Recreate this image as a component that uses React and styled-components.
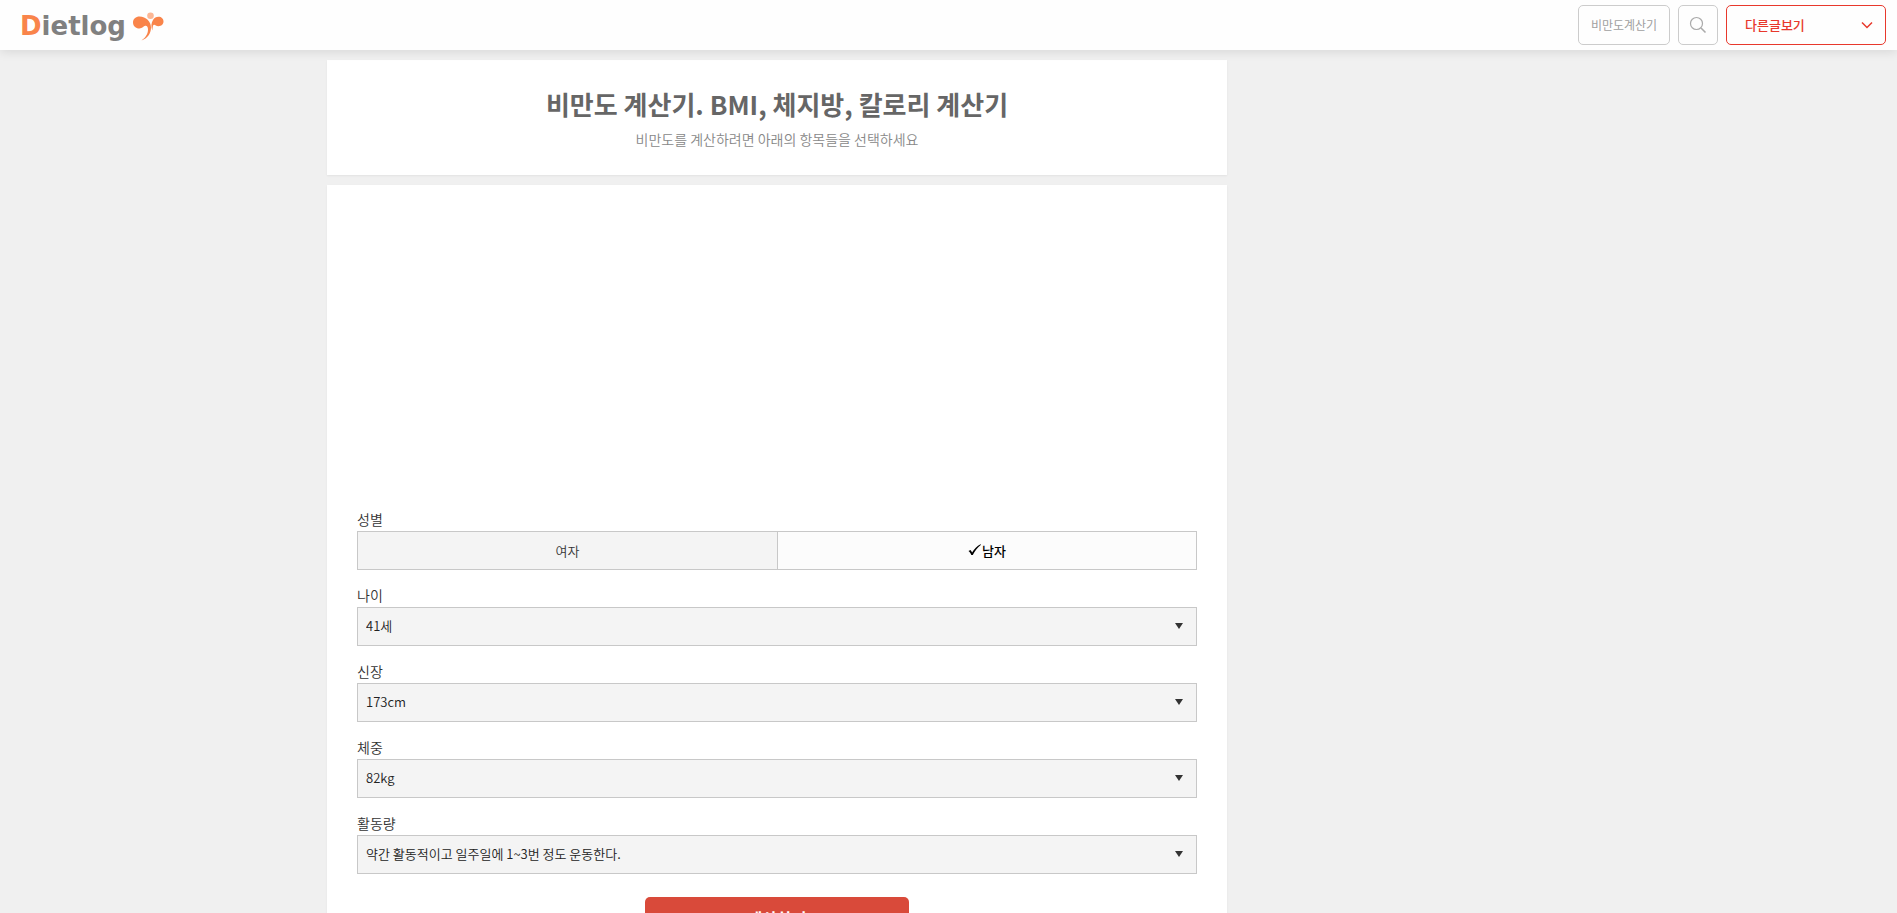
import React, { useState } from "react";
import styled, { createGlobalStyle } from "styled-components";

const GlobalStyle = createGlobalStyle`
  *, *::before, *::after { box-sizing: border-box; }
  body {
    margin: 0;
    background: #f0f0f0;
    color: #444;
    font-family: "Noto Sans CJK KR", "Noto Sans", sans-serif;
    font-size: 13px;
    line-height: 20px;
  }
  button, select, input { font: inherit; color: inherit; }
`;

const Header = styled.header`
  position: sticky;
  top: 0;
  z-index: 2;
  display: flex;
  align-items: center;
  justify-content: space-between;
  height: 50px;
  padding: 0 11px 0 20px;
  background: #fefefe;
  box-shadow: 0 2px 10px rgba(0, 0, 0, 0.1);
`;

const Logo = styled.a`
  display: flex;
  align-items: center;
  gap: 7px;
  padding-top: 2px;
  color: #808080;
  font-family: "DejaVu Sans", sans-serif;
  font-size: 26px;
  font-weight: 700;
  line-height: 32px;
  text-decoration: none;
`;

const LogoInitial = styled.span`
  color: #f9844a;
`;

const Nav = styled.nav`
  display: flex;
  gap: 8px;
`;

const NavButton = styled.button`
  display: flex;
  align-items: center;
  justify-content: ${(p) => (p.$spread ? "space-between" : "center")};
  width: ${(p) => p.$width};
  height: 40px;
  padding: ${(p) => (p.$spread ? "0 12px 0 18px" : "0")};
  border: 1px solid ${(p) => (p.$accent ? "#e8382c" : "#ccc")};
  border-radius: 5px;
  background: #fefefe;
  color: ${(p) => (p.$accent ? "#e8382c" : "#a0a0a0")};
  font-size: ${(p) => (p.$accent ? "13px" : "12px")};
  font-weight: ${(p) => (p.$accent ? 500 : 400)};
  cursor: pointer;
`;

const Page = styled.div`
  max-width: 1243px;
  margin: 0 auto;
  padding: 10px 0;
`;

const Column = styled.main`
  display: flex;
  flex-direction: column;
  gap: 10px;
  max-width: 900px;
`;

const Card = styled.section`
  padding: ${(p) => p.$padding};
  background: #fff;
  box-shadow: 0 1px 2px rgba(0, 0, 0, 0.06);
`;

const Title = styled.h1`
  margin: 0;
  color: #666;
  font-size: 26px;
  font-weight: 700;
  line-height: 40px;
  text-align: center;
`;

const Subtitle = styled.p`
  margin: 5px 0 0;
  color: #888;
  font-size: 14px;
  font-weight: 350;
  line-height: 20px;
  text-align: center;
`;

const AdSlot = styled.div`
  height: 280px;
`;

const Form = styled.form`
  display: flex;
  flex-direction: column;
  gap: 15px;
`;

const Field = styled.div`
  display: flex;
  flex-direction: column;
  gap: 2px;
`;

const Label = styled.label`
  color: #333;
  font-size: 14px;
  font-weight: 350;
  line-height: 20px;
`;

const Segments = styled.div`
  display: grid;
  grid-template-columns: 1fr 1fr;
  height: 39px;
  border: 1px solid #c8c8c8;
`;

const Segment = styled.label`
  display: flex;
  align-items: center;
  justify-content: center;
  background: ${(p) => (p.$on ? "#fcfcfc" : "#f4f4f4")};
  color: ${(p) => (p.$on ? "#000" : "#333")};
  font-weight: ${(p) => (p.$on ? 500 : 350)};
  cursor: pointer;

  & + & { border-left: 1px solid #c8c8c8; }
`;

const HiddenRadio = styled.input`
  appearance: none;
  width: 0;
  height: 0;
  margin: 0;
`;

const SelectWrap = styled.div`
  display: grid;
  align-items: center;

  & > * { grid-area: 1 / 1; }
  & > svg { justify-self: end; margin: 0 14px 2px 0; pointer-events: none; }
`;

const Select = styled.select`
  appearance: none;
  width: 100%;
  height: 39px;
  padding: 0 32px 2px 8px;
  border: 1px solid #c8c8c8;
  border-radius: 0;
  background: #f4f4f4;
  color: #222;
  font-weight: 350;
`;

const Submit = styled.button`
  align-self: center;
  width: 264px;
  height: 42px;
  margin-top: 8px;
  border: 0;
  border-radius: 5px;
  background: #d94a3a;
  color: #fff;
  font-size: 16px;
  font-weight: 700;
  cursor: pointer;
`;

const Butterfly = () => (
  <svg width="31" height="29" viewBox="0 0 31 29" fill="#f9844a" aria-hidden="true">
    <circle cx="17.5" cy="3.7" r="3.3" fill="#fcb795" />
    <path d="M6.5 4.5C2.8 4.5 0 7 0 10.500S2.800 16.500 6.300 16.500C9.500 16.500 10.500 14.200 12.200 13.800C14 13.500 15 15 15 17.500C15 22 12.500 25.500 8.500 28.500C14.500 26.500 18 21.500 18 15.500C18 9.500 13 4.500 6.500 4.500z" />
    <path d="M25.500 4.800C28.400 4.800 30.500 6.900 30.500 9.500S28.400 14.200 25.500 14.200C23 14.200 22.200 12.500 21 12.700C19.600 13 19.800 15.500 19.300 18.500C17.800 14.500 18.300 10.500 20 8C21.300 6 23.200 4.800 25.500 4.800z" />
  </svg>
);

const SearchIcon = () => (
  <svg width="18" height="18" viewBox="0 0 18 18" fill="none" stroke="#aaa" aria-hidden="true">
    <circle cx="7.5" cy="7.5" r="6" strokeWidth="1.2" />
    <path d="M12 12l4.5 4.5" strokeWidth="1.6" />
  </svg>
);

const Chevron = () => (
  <svg width="12" height="8" viewBox="0 0 12 8" fill="none" stroke="#e8382c" strokeWidth="1.5" aria-hidden="true">
    <path d="M1 1.5l5 5 5-5" />
  </svg>
);

const Triangle = () => (
  <svg width="8" height="6" viewBox="0 0 8 6" fill="#333" aria-hidden="true">
    <path d="M0 0h8L4 6z" />
  </svg>
);

const Check = () => (
  <svg width="14" height="14" viewBox="0 0 14 14" fill="#000" aria-hidden="true">
    <path d="M0.5 7L2.500 6C3.200 6.800 3.700 7.600 4.100 8.500C6.200 5 9 2 12.500 0.300L13 0.800C9.500 3.600 6.600 7.200 4.800 11H3.300C2.700 9.400 1.700 8 0.500 7z" />
  </svg>
);

const FIELDS = [
  { id: "age", label: "나이", options: ["41세"] },
  { id: "height", label: "신장", options: ["173cm"] },
  { id: "weight", label: "체중", options: ["82kg"] },
  { id: "activity", label: "활동량", options: ["약간 활동적이고 일주일에 1~3번 정도 운동한다."] },
];

const GENDERS = ["여자", "남자"];

export default function App() {
  const [gender, setGender] = useState("남자");
  return (
    <>
      <GlobalStyle />
      <Header>
        <Logo href="#">
          <span><LogoInitial>D</LogoInitial>ietlog</span>
          <Butterfly />
        </Logo>
        <Nav>
          <NavButton type="button" $width="92px">비만도계산기</NavButton>
          <NavButton type="button" $width="40px" aria-label="검색"><SearchIcon /></NavButton>
          <NavButton type="button" $width="160px" $accent $spread>다른글보기<Chevron /></NavButton>
        </Nav>
      </Header>
      <Page>
        <Column>
          <Card $padding="24px 30px 26px">
            <Title>비만도 계산기. BMI, 체지방, 칼로리 계산기</Title>
            <Subtitle>비만도를 계산하려면 아래의 항목들을 선택하세요</Subtitle>
          </Card>
          <Card $padding="44px 30px 30px">
            <AdSlot />
            <Form onSubmit={(e) => e.preventDefault()}>
              <Field role="radiogroup" aria-labelledby="gender-label">
                <Label as="span" id="gender-label">성별</Label>
                <Segments>
                  {GENDERS.map((g) => (
                    <Segment key={g} $on={gender === g}>
                      <HiddenRadio type="radio" name="gender" checked={gender === g} onChange={() => setGender(g)} />
                      {gender === g && <Check />}
                      {g}
                    </Segment>
                  ))}
                </Segments>
              </Field>
              {FIELDS.map((f) => (
                <Field key={f.id}>
                  <Label htmlFor={f.id}>{f.label}</Label>
                  <SelectWrap>
                    <Select id={f.id}>
                      {f.options.map((o) => <option key={o}>{o}</option>)}
                    </Select>
                    <Triangle />
                  </SelectWrap>
                </Field>
              ))}
              <Submit type="submit">계산하기</Submit>
            </Form>
          </Card>
        </Column>
      </Page>
    </>
  );
}
